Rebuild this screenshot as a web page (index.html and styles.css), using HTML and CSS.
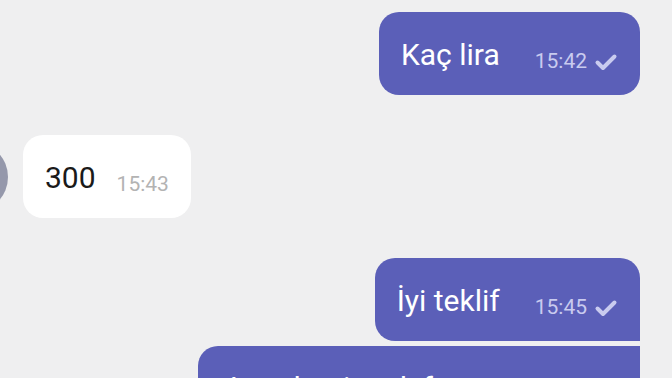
FILE: index.html
```html
<!DOCTYPE html>
<html lang="tr">
<head>
    <meta charset="UTF-8">
    <meta name="viewport" content="width=device-width, initial-scale=1.0">
    <title>Sohbet</title>
    <link rel="stylesheet" href="styles.css">
</head>
<body>

    <div class="chat">
        <div class="row out first">
            <div class="bubble">
                <span class="text">Kaç lira</span>
                <span class="meta">15:42 <svg class="tick" viewBox="0 0 24 24"><path d="M3.5 12.5l5.5 5.5L20.5 6.5"/></svg></span>
            </div>
        </div>

        <div class="row in">
            <div class="avatar"></div>
            <div class="bubble">
                <span class="text">300</span>
                <span class="meta">15:43</span>
            </div>
        </div>

        <div class="row out">
            <div class="bubble top">
                <span class="text">İyi teklif</span>
                <span class="meta">15:45 <svg class="tick" viewBox="0 0 24 24"><path d="M3.5 12.5l5.5 5.5L20.5 6.5"/></svg></span>
            </div>
        </div>

        <div class="row out next">
            <div class="bubble long">
                <span class="text">Ama benim ek fatura kesmem lazım, kargo da sizden olur</span>
            </div>
        </div>
    </div>

</body>
</html>
```

FILE: styles.css
```css
body {
    margin: 0;
    padding: 0;
    background-color: #efeff0;
    font-family: 'Roboto', 'Noto Sans', sans-serif;
    overflow: hidden;
    height: 378px;
}

.chat {
    display: flex;
    flex-direction: column;
    padding: 12px 32px 0 0;
}

.row {
    display: flex;
    align-items: center;
    margin-top: 40px;
}

.row.first {
    margin-top: 0;
}

.row.next {
    margin-top: 5px;
}

.row.out {
    justify-content: flex-end;
}

.avatar {
    width: 70px;
    height: 70px;
    border-radius: 50%;
    background-color: #9598ab;
    margin-left: -62px;
    margin-right: 15px;
    flex-shrink: 0;
}

.bubble {
    display: flex;
    align-items: baseline;
    padding: 21px 22px 19px;
    border-radius: 20px;
    line-height: 43px;
    box-sizing: border-box;
}

.out .bubble {
    background-color: #5b5fb8;
    color: #ffffff;
}

.in .bubble {
    background-color: #ffffff;
    color: #1a1a1a;
}

.bubble.top {
    border-bottom-right-radius: 0;
}

.bubble.long {
    max-width: 442px;
    border-top-right-radius: 0;
    padding-top: 20px;
    padding-left: 26px;
}

.text {
    font-size: 30px;
}

.meta {
    display: flex;
    align-items: center;
    gap: 7px;
    font-size: 21px;
    line-height: 21px;
    margin-left: 21px;
    position: relative;
    top: 3px;
    color: #b3b3b3;
}

.out .meta {
    margin-left: 35px;
    color: #c9cbef;
}

.tick {
    width: 24px;
    height: 24px;
    fill: none;
    stroke: #c9cbef;
    stroke-width: 4;
    stroke-linecap: round;
    stroke-linejoin: round;
}
```
